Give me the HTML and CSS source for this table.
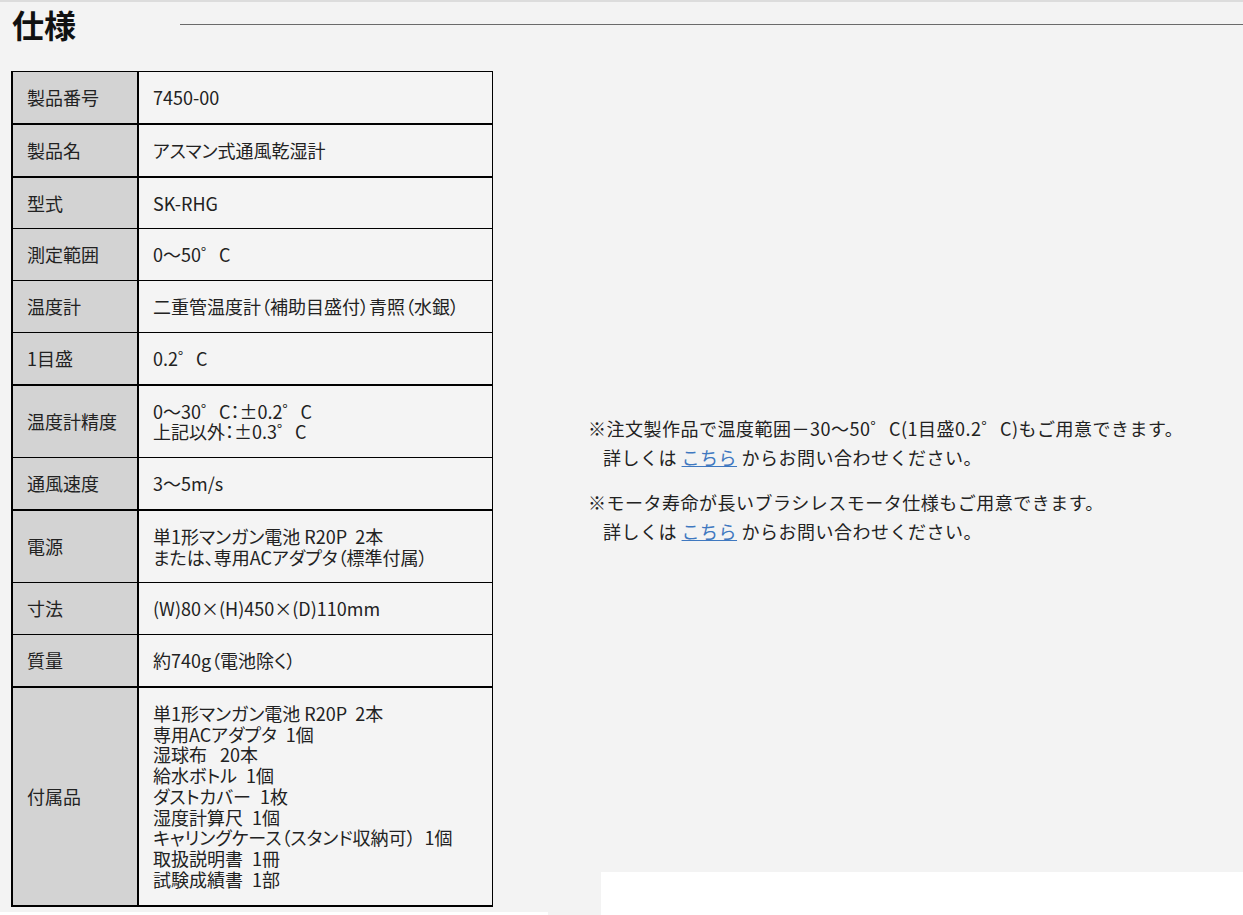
FILE: index.html
```html
<!DOCTYPE html>
<html lang="ja">
<head>
<meta charset="utf-8">
<title>仕様</title>
<link rel="stylesheet" href="styles.css">
</head>
<body>
<div class="page">
  <header class="head">
    <h2 class="title">仕様</h2>
    <div class="rule"></div>
  </header>
  <div class="content">
    <table class="spec">
      <tr class="tk"><th>製品番号</th><td>7450-00</td></tr>
      <tr class="tk"><th>製品名</th><td>アスマン式通風乾湿計</td></tr>
      <tr><th>型式</th><td>SK-RHG</td></tr>
      <tr><th>測定範囲</th><td>0～50゜C</td></tr>
      <tr><th>温度計</th><td>二重管温度計（補助目盛付）青照（水銀）</td></tr>
      <tr class="tk"><th>1目盛</th><td>0.2゜C</td></tr>
      <tr><th>温度計精度</th><td>0～30゜C：±0.2゜C<br>上記以外：±0.3゜C</td></tr>
      <tr class="tk"><th>通風速度</th><td>3～5m/s</td></tr>
      <tr><th>電源</th><td>単1形マンガン電池 R20P&nbsp; 2本<br>または、専用ACアダプタ（標準付属）</td></tr>
      <tr><th>寸法</th><td>(W)80×(H)450×(D)110mm</td></tr>
      <tr class="tk"><th>質量</th><td>約740g（電池除く）</td></tr>
      <tr class="tk"><th>付属品</th><td>単1形マンガン電池 R20P&nbsp; 2本<br>専用ACアダプタ&ensp;1個<br>湿球布&ensp; 20本<br>給水ボトル&ensp;1個<br>ダストカバー&ensp;1枚<br>湿度計算尺&ensp;1個<br>キャリングケース（スタンド収納可）&ensp;1個<br>取扱説明書&ensp;1冊<br>試験成績書&ensp;1部</td></tr>
    </table>
    <div class="side">
      <div class="notes">
        <p>※注文製作品で温度範囲－30～50゜C(1目盛0.2゜C)もご用意できます。<br><span class="ind">詳しくは <a href="#">こちら</a> からお問い合わせください。</span></p>
        <p>※モータ寿命が長いブラシレスモータ仕様もご用意できます。<br><span class="ind">詳しくは <a href="#">こちら</a> からお問い合わせください。</span></p>
      </div>
      <div class="side-block"></div>
    </div>
  </div>
  <div class="foot">
    <div class="foot-left"></div>
    <div class="foot-gap"></div>
    <div class="foot-right"></div>
  </div>
</div>
</body>
</html>
```

FILE: styles.css
```css
html, body {
  margin: 0;
  padding: 0;
  background: #f3f3f3;
}
body {
  font-family: "Noto Sans CJK JP", "Noto Sans", sans-serif;
  color: #222;
  overflow: hidden;
}
.page {
  border-top: 2px solid #dcdcdc;
  height: 913px;
  display: flex;
  flex-direction: column;
}
.head {
  display: flex;
  align-items: center;
  padding: 6px 0 0 12px;
}
.title {
  margin: 0;
  font-size: 32px;
  line-height: 32px;
  font-weight: 700;
  color: #111;
  width: 168px;
}
.rule {
  flex: 1;
  height: 1px;
  background: #6a6a6a;
}
.content {
  display: flex;
  margin-top: 31px;
}
.spec {
  border-collapse: collapse;
  margin-left: 11px;
  width: 482px;
  font-size: 18px;
  font-feature-settings: "palt";
  flex: none;
}
.spec th, .spec td {
  border: 1px solid #000;
  padding: 15px 12px 15px 14px;
  line-height: 20.75px;
  text-align: left;
  vertical-align: middle;
  font-weight: 400;
  white-space: nowrap;
}
.spec th {
  width: 98px;
  background: #d3d3d3;
  border-left: 2px solid #000;
  border-right: 2px solid #000;
}
.spec td {
  background: #f4f4f4;
}
.spec tr.tk > th, .spec tr.tk > td {
  border-bottom: 2px solid #000;
}
.side {
  flex: 1;
  display: flex;
  flex-direction: column;
  padding-left: 95px;
}
.notes {
  margin: auto 0;
  padding-top: 18px;
  font-size: 18px;
  letter-spacing: 0.5px;
  line-height: 29px;
}
.notes p {
  margin: 0 0 16px;
}
.notes p:last-child {
  margin-bottom: 0;
}
.ind {
  padding-left: 15px;
}
.notes a {
  color: #3f78c0;
  text-decoration: underline;
}
.side-block {
  margin-left: 13px;
  height: 35px;
  background: #fff;
}
.foot {
  flex: 1;
  display: flex;
}
.foot-left {
  width: 548px;
  border-top: 5px solid #f3f3f3;
  background: #fff;
}
.foot-gap {
  width: 53px;
}
.foot-right {
  flex: 1;
  background: #fff;
}
```
